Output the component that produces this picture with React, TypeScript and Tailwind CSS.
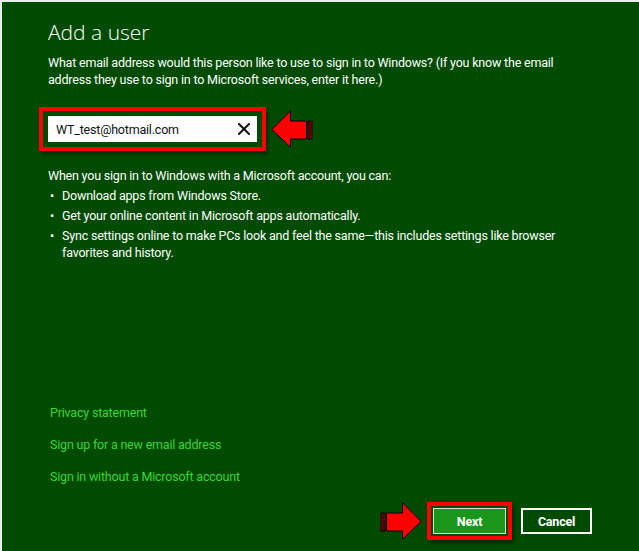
import React from "react";

const font = { fontFamily: '"Open Sans", "Noto Sans", sans-serif' };
const bodyFont = { fontFamily: 'Roboto, "Open Sans", sans-serif' };

function RedArrow({ flip = false }: { flip?: boolean }) {
  return (
    <svg
      width="42"
      height="38"
      viewBox="0 0 42 38"
      className={flip ? "-scale-x-100" : ""}
    >
      <rect x="1" y="11" width="4" height="18" fill="#b00000" stroke="#000" strokeWidth="1" />
      <line x1="3" y1="11" x2="3" y2="29" stroke="#000" strokeWidth="1" />
      <path
        d="M6.5 11 H22.5 V0.8 L41.2 19.5 L22.5 37.2 V29 H6.5 Z"
        fill="#ff0000"
        stroke="#000"
        strokeWidth="1"
      />
    </svg>
  );
}

function ClearIcon() {
  return (
    <svg width="12" height="12" viewBox="0 0 12 12">
      <path d="M1 1 L11 11 M11 1 L1 11" stroke="#111" strokeWidth="2" strokeLinecap="square" />
    </svg>
  );
}

const benefits = [
  "Download apps from Windows Store.",
  "Get your online content in Microsoft apps automatically.",
  <>
    Sync settings online to make PCs look and feel the same—this includes settings like browser
    <br />
    favorites and history.
  </>,
];

const links = [
  "Privacy statement",
  "Sign up for a new email address",
  "Sign in without a Microsoft account",
];

export default function App() {
  return (
    <div
      style={font}
      className="flex h-[551px] w-[639px] flex-col border-l-2 border-t-2 border-[#e8f0e8] bg-[#004b00] pt-[16px] pl-[46px] text-white"
    >
      <h1 className="text-[21px] font-light leading-[28px]">Add a user</h1>

      <div style={bodyFont} className="flex flex-col text-[12.5px] leading-[17px] tracking-[-0.2px]">
        <p className="mt-[8px]">
          What email address would this person like to use to sign in to Windows? (If you know the email
          <br />
          address they use to sign in to Microsoft services, enter it here.)
        </p>

        <div className="-ml-[9px] mt-[19px] flex items-center gap-[5px]">
          <div className="border-[4px] border-[#ff0000] p-[5px] shadow-[2px_3px_4px_rgba(0,0,0,0.45)]">
            <div className="flex h-[26px] w-[209px] items-center justify-between bg-white pl-[8px] pr-[7px]">
              <span className="text-[#111]">WT_test@hotmail.com</span>
              <ClearIcon />
            </div>
          </div>
          <RedArrow flip />
        </div>

        <p className="mt-[16px]">When you sign in to Windows with a Microsoft account, you can:</p>
        <ul className="mt-[3px] flex flex-col gap-[3px]">
          {benefits.map((item, i) => (
            <li key={i} className="flex">
              <span className="w-[14px] shrink-0 pl-[2px]">•</span>
              <span>{item}</span>
            </li>
          ))}
        </ul>

        <div className="mt-[143px] flex flex-col gap-[15px] pl-[2px] text-[#38d638]">
          {links.map((link) => (
            <span key={link}>{link}</span>
          ))}
        </div>

        <div className="mt-[17px] flex items-center justify-end pr-[47px]">
          <RedArrow />
          <div className="ml-[5px] border-[4px] border-[#ff0000] p-[2px] shadow-[2px_3px_4px_rgba(0,0,0,0.45)]">
            <button className="flex h-[26px] w-[73px] items-center justify-center border border-[#cfe8cf] bg-[#1a971a] font-bold">
              Next
            </button>
          </div>
          <button className="ml-[9px] flex h-[26px] w-[71px] items-center justify-center border-2 border-white bg-[#004b00] font-bold">
            Cancel
          </button>
        </div>
      </div>
    </div>
  );
}
